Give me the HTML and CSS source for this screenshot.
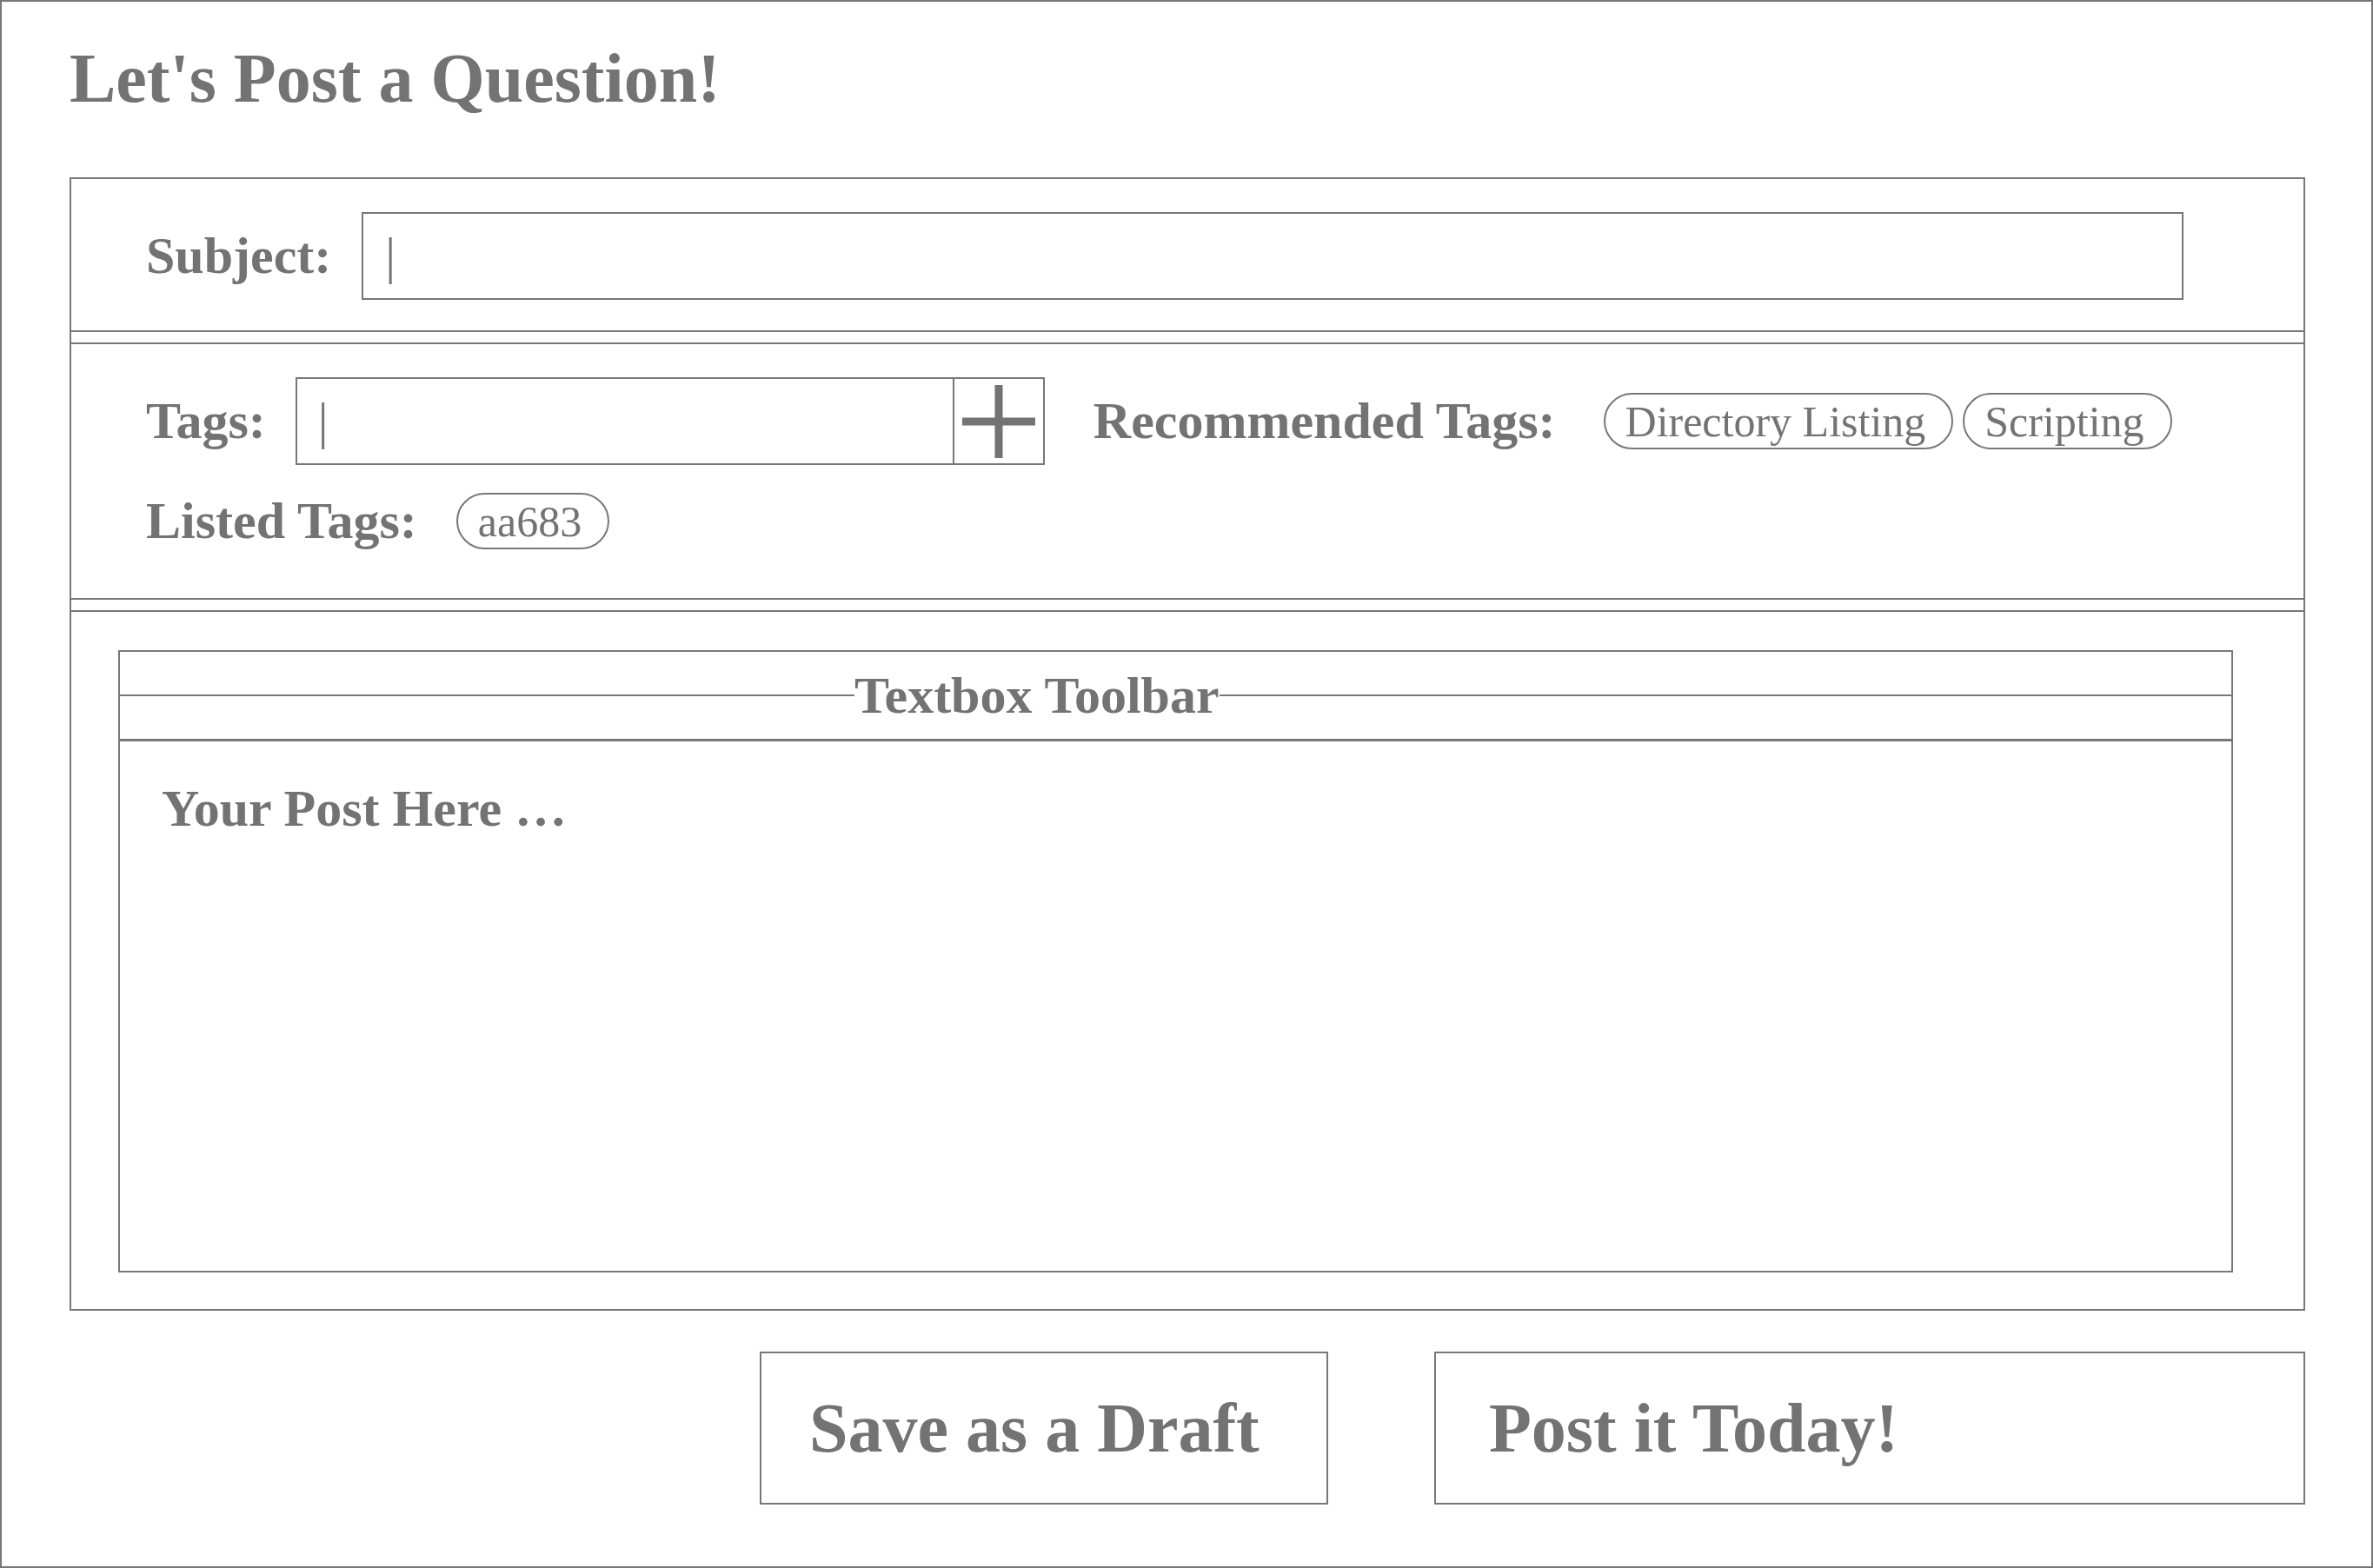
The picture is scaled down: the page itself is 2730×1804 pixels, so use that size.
FILE: index.html
```html
<!DOCTYPE html>
<html lang="en">
<head>
<meta charset="utf-8">
<title>Let's Post a Question!</title>
<link rel="stylesheet" href="styles.css">
</head>
<body>
<div class="page">
  <h1 class="title">Let's Post a Question!</h1>
  <div class="form">
    <div class="section subject-row">
      <span class="label">Subject:</span>
      <div class="field subject-field"><span class="cursor">|</span></div>
    </div>
    <div class="divider"></div>
    <div class="section tags-section">
      <div class="row tags-row">
        <span class="label">Tags:</span>
        <div class="tag-input">
          <div class="tag-text"><span class="cursor">|</span></div>
          <div class="add-btn">
            <svg width="84" height="84" viewBox="0 0 84 84" aria-hidden="true">
              <path d="M42 0 V84 M0 42 H84" stroke="#737373" stroke-width="9" fill="none"/>
            </svg>
          </div>
        </div>
        <span class="label rec-label">Recommended Tags:</span>
        <div class="pills">
          <span class="pill">Directory Listing</span>
          <span class="pill">Scripting</span>
        </div>
      </div>
      <div class="row listed-row">
        <span class="label">Listed Tags:</span>
        <span class="pill">aa683</span>
      </div>
    </div>
    <div class="divider"></div>
    <div class="section editor-section">
      <div class="editor">
        <div class="toolbar"><span class="toolbar-title">Textbox Toolbar</span></div>
        <div class="editor-body"><p class="placeholder">Your Post Here …</p></div>
      </div>
    </div>
  </div>
  <div class="actions">
    <button class="btn btn-draft">Save as a Draft</button>
    <button class="btn btn-post">Post it Today!</button>
  </div>
</div>
</body>
</html>
```

FILE: styles.css
```css
* { box-sizing: border-box; }

body {
  margin: 0;
  font-family: "Liberation Serif", "Times New Roman", serif;
  color: #737373;
  background: #fff;
}

.page {
  width: 2730px;
  height: 1804px;
  border: 2px solid #777;
  padding: 43px 76px 0 78px;
}

.title {
  margin: 0;
  font-size: 80px;
  font-weight: 700;
  line-height: normal;
}

.form {
  margin-top: 68px;
  border: 2px solid #777;
}

.label {
  font-size: 60px;
  font-weight: 700;
  white-space: nowrap;
}

.cursor {
  font-size: 59px;
  font-weight: 400;
  line-height: 1;
}

.divider {
  height: 16px;
  border-top: 2px solid #777;
  border-bottom: 2px solid #777;
}

.subject-row {
  display: flex;
  align-items: center;
  gap: 35px;
  padding: 38px 138px 35px 86px;
}

.field {
  height: 101px;
  border: 2px solid #777;
  display: flex;
  align-items: center;
  padding-left: 25px;
}

.subject-field { flex: 1; }

.tags-section {
  padding: 38px 0 54px 86px;
  display: flex;
  flex-direction: column;
  gap: 30px;
}

.row {
  display: flex;
  align-items: center;
}

.tags-row > .label:first-child { margin-right: 34px; }

.tag-input {
  width: 862px;
  height: 101px;
  border: 2px solid #777;
  display: flex;
}

.tag-text {
  flex: 1;
  display: flex;
  align-items: center;
  padding-left: 24px;
}

.add-btn {
  width: 104px;
  border-left: 2px solid #777;
  display: flex;
  align-items: center;
  justify-content: center;
}

.add-btn svg { display: block; }

.rec-label { margin-left: 56px; margin-right: 55px; }

.pills {
  display: flex;
  gap: 11px;
}

.pill {
  display: inline-flex;
  align-items: center;
  height: 65px;
  padding: 0 30px 0 23px;
  border: 2px solid #777;
  border-radius: 33px;
  font-size: 50px;
  font-weight: 400;
  white-space: nowrap;
}

.listed-row .label { margin-right: 45px; }

.editor-section {
  padding: 44px 81px 42px 54px;
}

.editor {
  border: 2px solid #777;
}

.toolbar {
  height: 103px;
  border-bottom: 3px solid #777;
  display: flex;
  align-items: center;
  background: linear-gradient(#777, #777) 0 49px / 100% 2px no-repeat;
}

.toolbar-title {
  margin-left: 845px;
  background: #fff;
  font-size: 60px;
  font-weight: 700;
  line-height: normal;
}

.editor-body {
  height: 609px;
  padding: 43px 0 0 48px;
}

.placeholder {
  margin: 0;
  font-size: 60px;
  font-weight: 700;
  line-height: normal;
}

.actions {
  display: flex;
  justify-content: flex-end;
  gap: 122px;
  margin-top: 47px;
}

.btn {
  height: 176px;
  border: 2px solid #777;
  background: #fff;
  color: inherit;
  font-family: inherit;
  font-size: 80px;
  font-weight: 700;
  display: flex;
  align-items: center;
  text-align: left;
  padding: 0;
  margin: 0;
  white-space: nowrap;
}

.btn-draft { width: 654px; padding-left: 55px; }
.btn-post { width: 1002px; padding-left: 61px; }
```
